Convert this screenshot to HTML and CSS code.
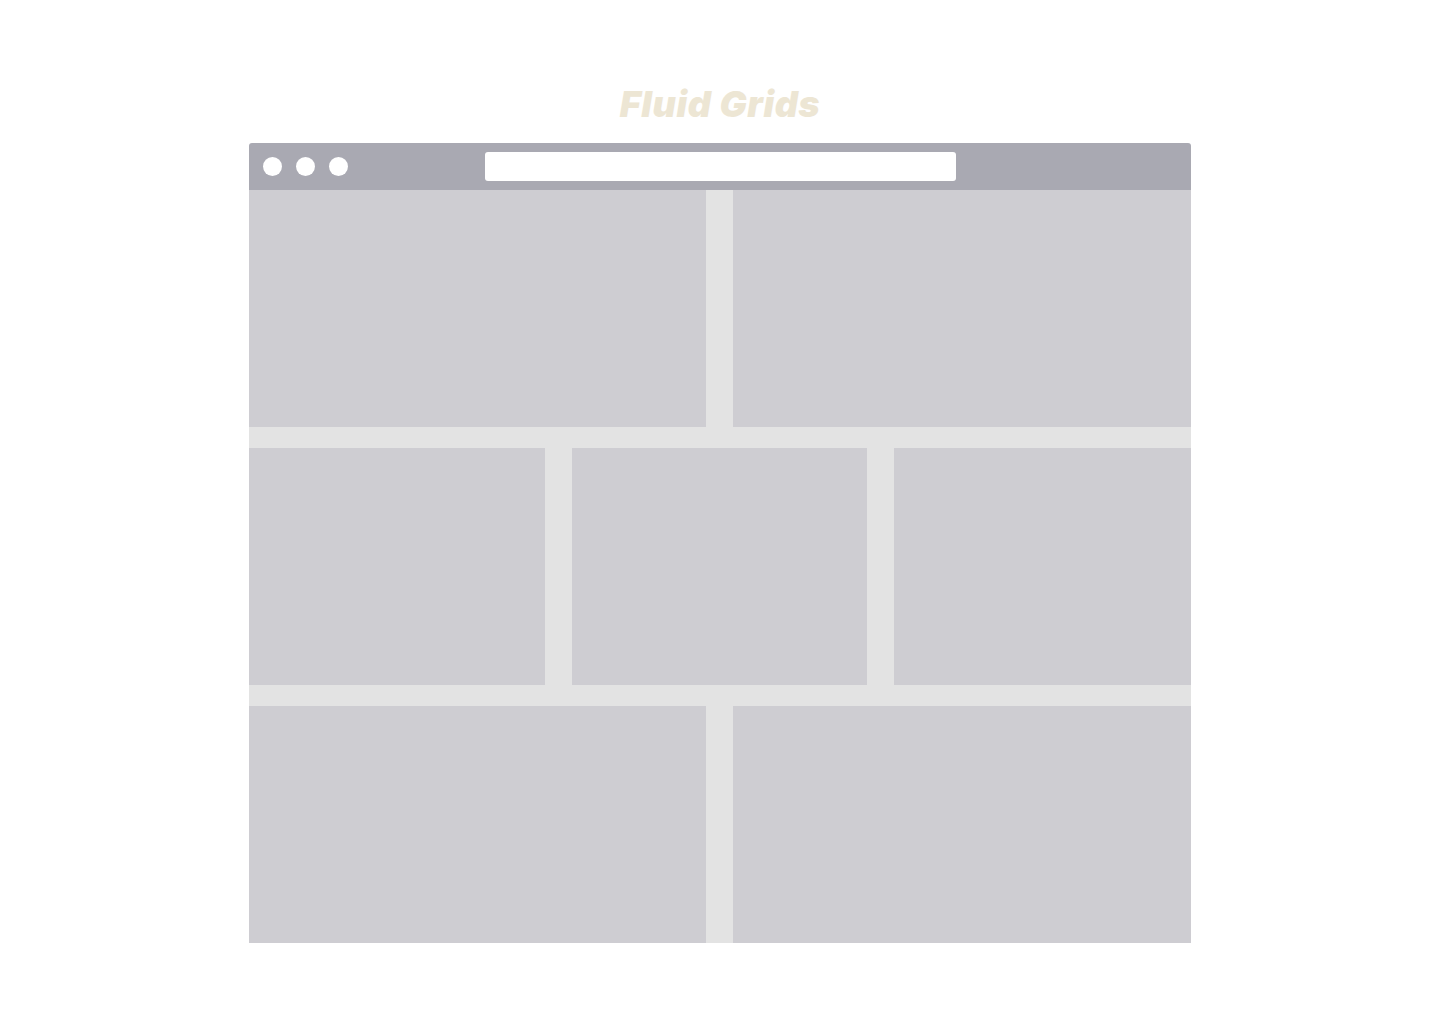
FILE: index.html
```html
<!DOCTYPE html>
<html lang="en">
<head>
<meta charset="utf-8">
<title>Fluid Grids</title>
<link rel="stylesheet" href="styles.css">
</head>
<body>
<main class="page">
  <h1 class="title">Fluid Grids</h1>
  <div class="browser">
    <div class="toolbar">
      <div class="dots"><span class="dot"></span><span class="dot"></span><span class="dot"></span></div>
      <div class="address"></div>
    </div>
    <div class="content">
      <div class="row row-2"><div class="cell"></div><div class="cell"></div></div>
      <div class="row row-3"><div class="cell"></div><div class="cell"></div><div class="cell"></div></div>
      <div class="row row-2"><div class="cell"></div><div class="cell"></div></div>
    </div>
  </div>
</main>
</body>
</html>
```
FILE: styles.css
```css
* { box-sizing: border-box; }
html, body { margin: 0; padding: 0; background: #ffffff; }
.page {
  width: 1440px;
  height: 1024px;
  display: flex;
  flex-direction: column;
  align-items: center;
  padding-top: 82px;
}
.title {
  margin: 0;
  height: 61px;
  font-family: Inter, Lato, sans-serif;
  font-weight: 900;
  font-style: italic;
  font-size: 36px;
  line-height: 44px;
  color: #ede6d4;
  letter-spacing: 0.6px;
}
.browser {
  width: 942px;
}
.toolbar {
  height: 47px;
  background: #a9a9b2;
  border-radius: 3px 3px 0 0;
  display: flex;
  align-items: center;
  padding-left: 14px;
}
.dots { display: flex; gap: 14px; }
.dot {
  width: 19px;
  height: 19px;
  border-radius: 50%;
  background: #ffffff;
}
.address {
  margin-left: 137px;
  width: 471px;
  height: 29px;
  background: #ffffff;
  border-radius: 3px;
}
.content {
  background: #e3e3e3;
  display: flex;
  flex-direction: column;
  gap: 21px;
}
.row {
  display: grid;
  height: 237px;
  column-gap: 27px;
}
.row-2 { grid-template-columns: 457px 1fr; }
.row-3 { grid-template-columns: 296px 295px 1fr; }
.cell { background: #cecdd2; }
```
